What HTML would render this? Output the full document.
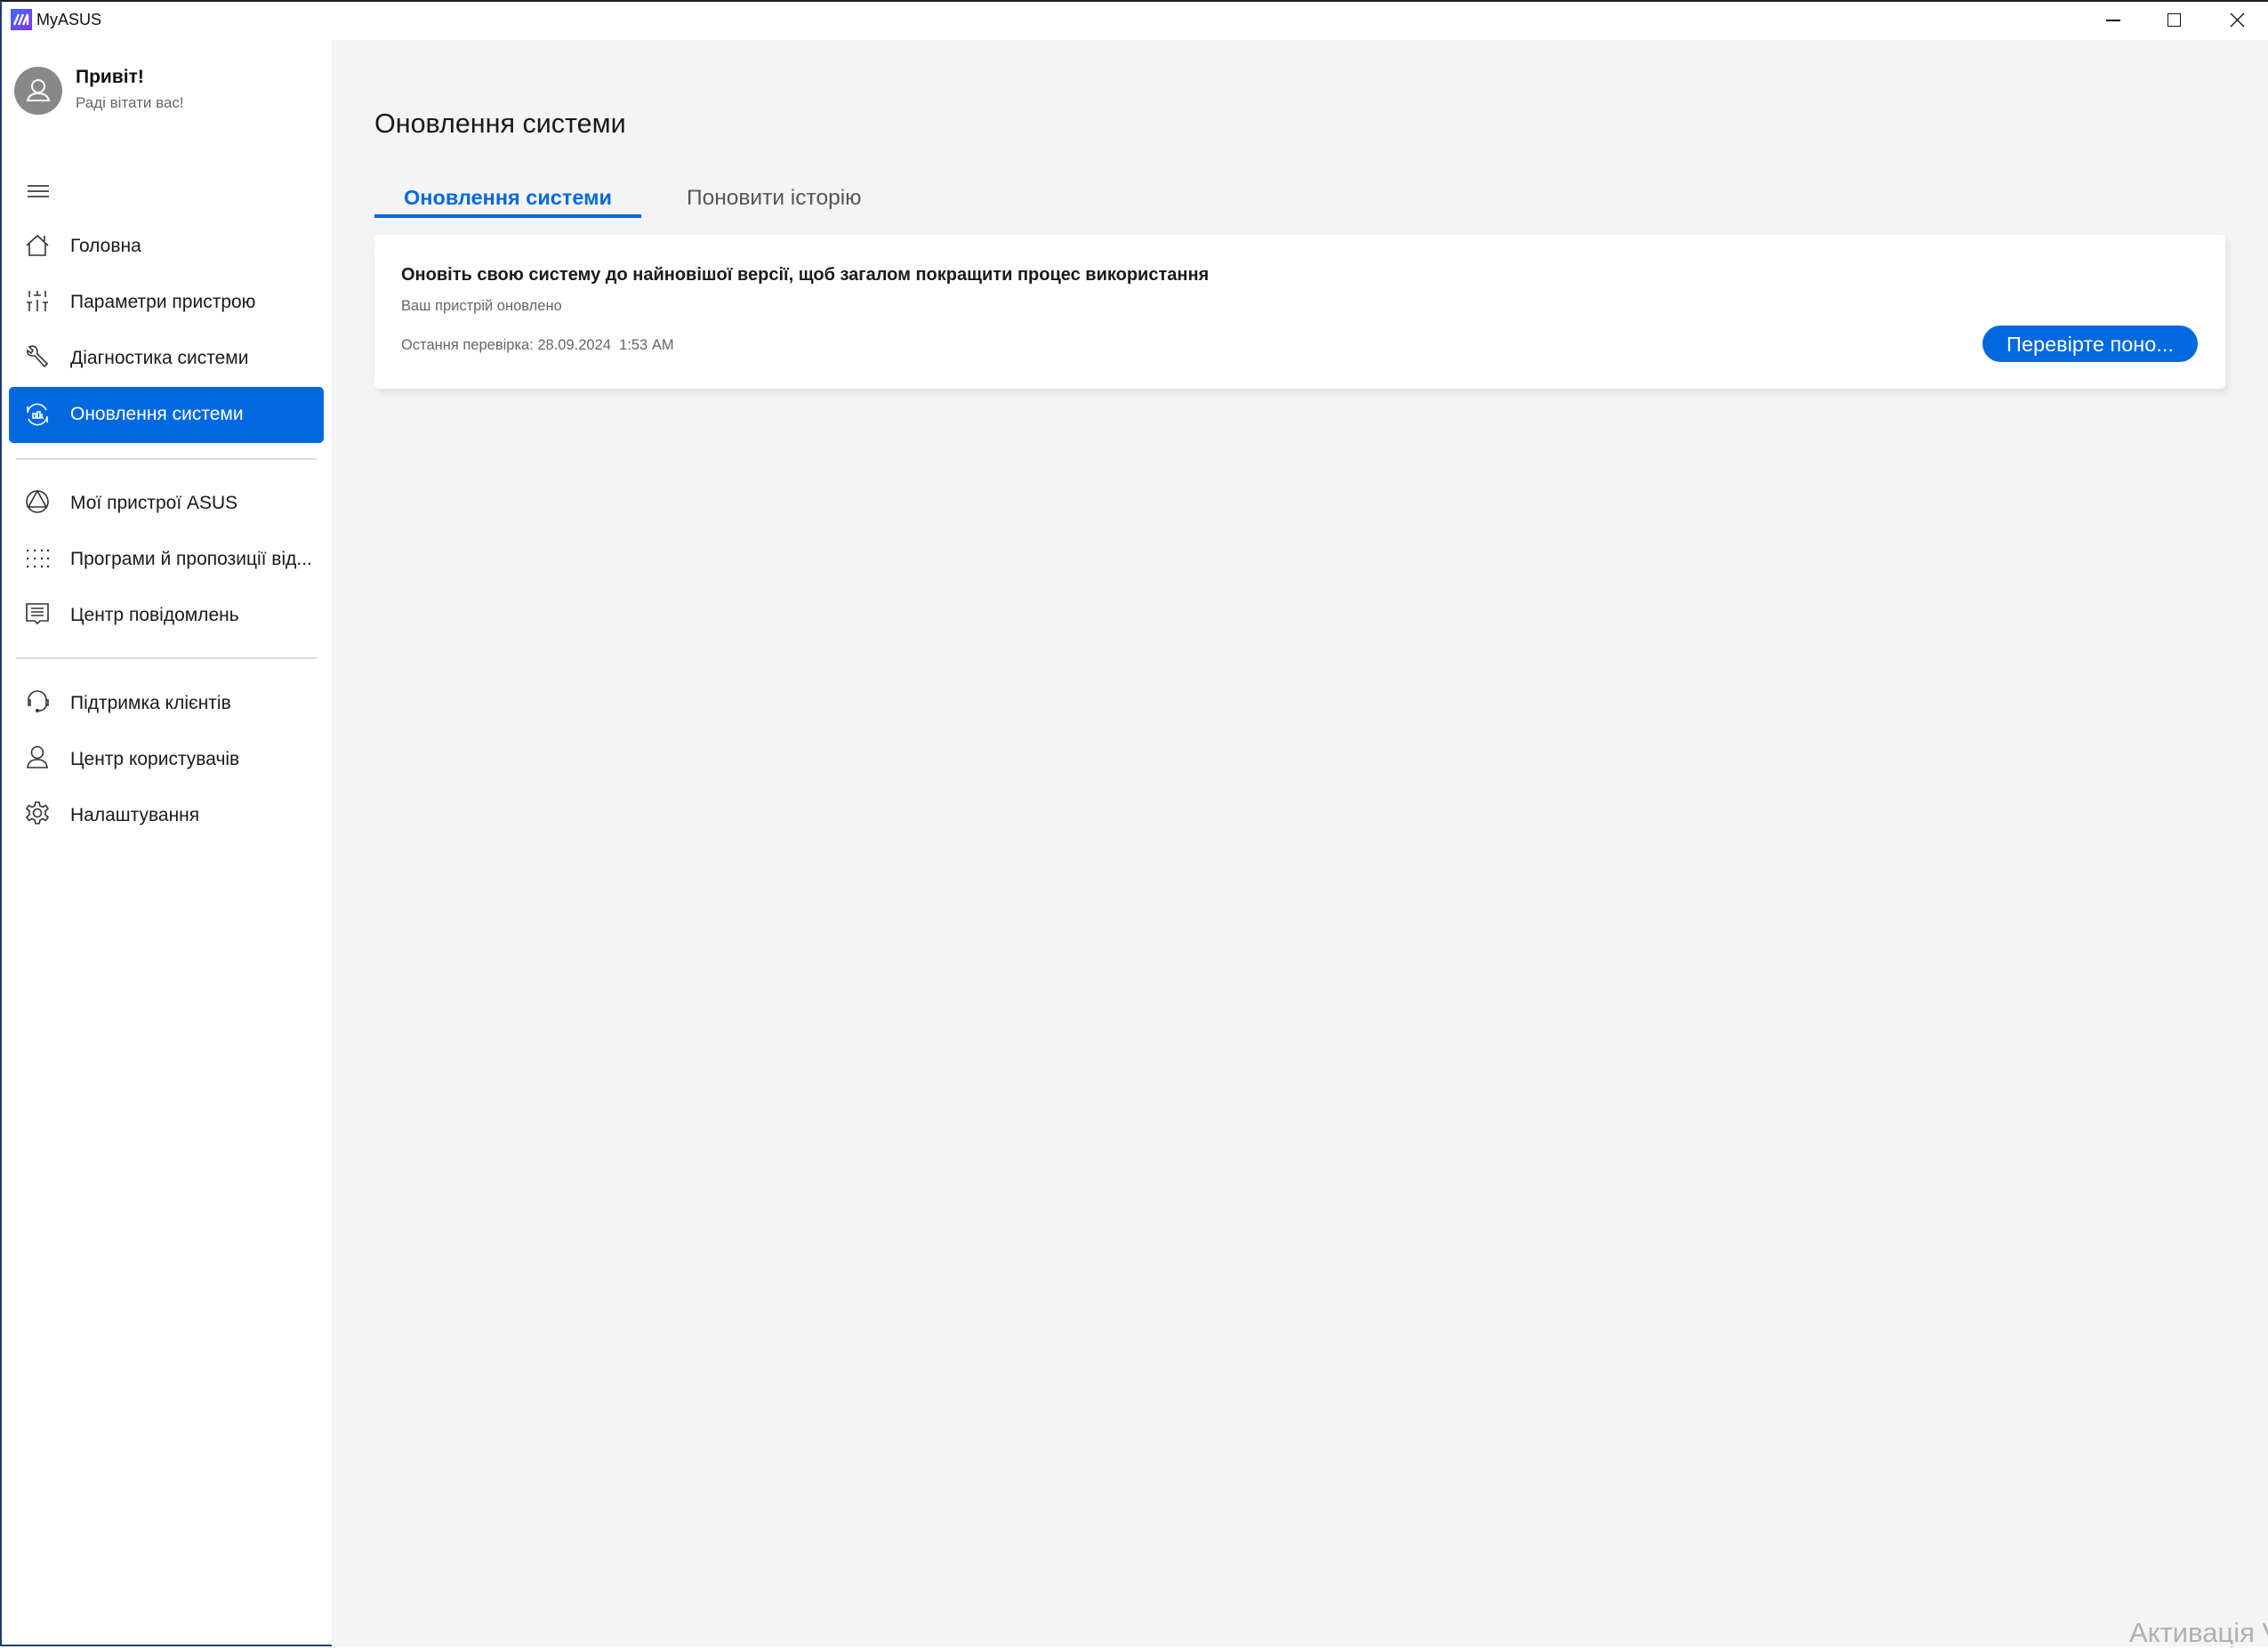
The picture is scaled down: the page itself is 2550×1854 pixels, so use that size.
<!DOCTYPE html>
<html><head><meta charset="utf-8">
<style>
*{margin:0;padding:0;box-sizing:border-box}
html,body{width:2550px;height:1851px;overflow:hidden;background:#fff;font-family:"Liberation Sans","Noto Sans CJK SC",sans-serif;color:#1a1a1a}
.abs{position:absolute}
.win{position:absolute;left:0;top:0;width:2550px;height:1851px;border-top:2px solid #1c1f26;border-left:2px solid #1f3c70;border-bottom:2px solid #1f3c70}
.main{position:absolute;left:373px;top:45px;right:0;bottom:0;background:#f4f4f4}
.nav{position:absolute;left:79px;font-size:21px;color:#1a1a1a;line-height:30px}
.ic{position:absolute;left:28px;width:28px;height:28px}
.ic svg{width:28px;height:28px;fill:none;stroke:#333;stroke-width:1.6}
.hr{position:absolute;left:18px;width:338px;height:2px;background:#d9d9d9}
</style></head><body>
<div class="win"></div>
<svg class="abs" style="left:12px;top:10px" width="24" height="24" viewBox="0 0 24 24"><defs><linearGradient id="g" x1="0" y1="0" x2="1" y2="1"><stop offset="0" stop-color="#3a6cff"/><stop offset="1" stop-color="#8a2cff"/></linearGradient></defs><rect width="24" height="24" fill="url(#g)"/><path d="M4 18 L9 6 M9 18 L14 6 M14 18 L19 6 L19 18" stroke="#fff" stroke-width="2.4" fill="none"/></svg>
<div class="abs" style="left:41px;top:12px;font-size:18px;color:#111">MyASUS</div>
<div class="abs" style="left:2368px;top:22px;width:16px;height:1.5px;background:#111"></div>
<div class="abs" style="left:2437px;top:15px;width:15px;height:15px;border:1.5px solid #111"></div>
<svg class="abs" style="left:2507px;top:14px" width="17" height="17" viewBox="0 0 17 17"><path d="M1 1L16 16M16 1L1 16" stroke="#111" stroke-width="1.3"/></svg>

<div class="main"></div>

<div class="abs" style="left:16px;top:75px;width:54px;height:54px;border-radius:50%;background:#888"></div>
<svg class="abs" style="left:16px;top:75px" width="54" height="54" viewBox="0 0 54 54" fill="none" stroke="#fff" stroke-width="2"><circle cx="27" cy="22" r="7"/><path d="M15 38 Q17 30 27 30 Q37 30 39 38 Z"/></svg>
<div class="abs" style="left:85px;top:75px;font-size:21px;font-weight:bold;color:#111">Привіт!</div>
<div class="abs" style="left:85px;top:106px;font-size:17px;color:#666">Раді вітати вас!</div>

<div class="abs" style="left:31px;top:208px;width:24px;height:1.5px;background:#555"></div>
<div class="abs" style="left:31px;top:214px;width:24px;height:1.5px;background:#555"></div>
<div class="abs" style="left:31px;top:220px;width:24px;height:1.5px;background:#555"></div>

<div class="ic" style="top:262px"><svg viewBox="0 0 28 28"><path d="M2 14 L14 3 L26 14 M5 11 V25 H23 V11 M22 9 V3"/></svg></div>
<div class="nav" style="top:262px">Головна</div>

<div class="ic" style="top:324px"><svg viewBox="0 0 28 28"><path d="M5 3V10 M14 3V8 M23 3V10 M10 8H18 M5 16V26 M2 16H8 M14 13V26 M23 16V26 M20 16H26"/></svg></div>
<div class="nav" style="top:325px">Параметри пристрою</div>

<div class="ic" style="top:387px"><svg viewBox="0 0 28 28"><path d="M5 3 L9 7 L7 10 L3 7 Q2 12 8 13 L11 13 L22 25 L25 22 L14 11 L14 8 Q13 2 8 2 Z"/></svg></div>
<div class="nav" style="top:388px">Діагностика системи</div>

<div class="abs" style="left:10px;top:435px;width:354px;height:63px;background:#0069e0;border-radius:5px"></div>
<div class="ic" style="top:452px"><svg viewBox="0 0 28 28" style="stroke:#fff"><path d="M3 12 A11 11 0 0 1 24 9 M25 16 A11 11 0 0 1 4 19 M3 5V12 M25 23V16 M9 13V18H12V13Z M14 11V18H17V11Z M19 13V18H21"/></svg></div>
<div class="nav" style="top:451px;color:#fff">Оновлення системи</div>

<div class="hr" style="top:515px"></div>

<div class="ic" style="top:550px"><svg viewBox="0 0 28 28"><circle cx="14" cy="14" r="12"/><path d="M14 2 L24 20 L4 20 Z"/></svg></div>
<div class="nav" style="top:551px">Мої пристрої ASUS</div>

<div class="ic" style="top:614px"><svg viewBox="0 0 28 28" style="stroke:#333;stroke-width:2.4;stroke-linecap:round"><path d="M3 4h.1M11 4h.1M19 4h.1M26 4h.1M3 13h.1M11 13h.1M19 13h.1M26 13h.1M3 22h.1M11 22h.1M19 22h.1M26 22h.1" transform="translate(0,1)"/></svg></div>
<div class="nav" style="top:614px">Програми й пропозиції від...</div>

<div class="ic" style="top:676px"><svg viewBox="0 0 28 28"><path d="M2 3H26V22H17L14 25L11 22H2Z M7 8H21 M7 12H21 M7 16H21"/></svg></div>
<div class="nav" style="top:677px">Центр повідомлень</div>

<div class="hr" style="top:739px"></div>

<div class="ic" style="top:775px"><svg viewBox="0 0 28 28"><path d="M4 16 V12 A10 10 0 0 1 24 12 V18 A8 8 0 0 1 15 24 M4 12H6V18H4Z M24 12H26V18H24Z"/><circle cx="14" cy="24" r="1.2" fill="#333"/></svg></div>
<div class="nav" style="top:776px">Підтримка клієнтів</div>

<div class="ic" style="top:837px"><svg viewBox="0 0 28 28"><circle cx="14" cy="9" r="6.5"/><path d="M3 26 Q4 17 14 17 Q24 17 25 26 Z"/></svg></div>
<div class="nav" style="top:839px">Центр користувачів</div>

<div class="ic" style="top:900px"><svg viewBox="0 0 28 28"><circle cx="14" cy="14" r="4.5"/><path d="M12 2H16L17 6L20 7.5L23.5 5.5L26 9L23 12V16L26 19L23.5 22.5L20 20.5L17 22L16 26H12L11 22L8 20.5L4.5 22.5L2 19L5 16V12L2 9L4.5 5.5L8 7.5L11 6Z"/></svg></div>
<div class="nav" style="top:902px">Налаштування</div>

<div class="abs" style="left:421px;top:122px;font-size:30.5px;color:#1a1a1a">Оновлення системи</div>
<div class="abs" style="left:454px;top:209px;font-size:23.5px;font-weight:bold;color:#0069e0">Оновлення системи</div>
<div class="abs" style="left:421px;top:241px;width:300px;height:4px;background:#0069e0"></div>
<div class="abs" style="left:772px;top:209px;font-size:24.5px;color:#555">Поновити історію</div>

<div class="abs" style="left:421px;top:264px;width:2081px;height:173px;background:#fff;border-radius:5px;box-shadow:3px 5px 8px rgba(0,0,0,0.08)"></div>
<div class="abs" style="left:451px;top:298px;font-size:20px;font-weight:bold;color:#1a1a1a">Оновіть свою систему до найновішої версії, щоб загалом покращити процес використання</div>
<div class="abs" style="left:451px;top:335px;font-size:16.5px;color:#666">Ваш пристрій оновлено</div>
<div class="abs" style="left:451px;top:379px;font-size:16.5px;color:#666">Остання перевірка: 28.09.2024&nbsp; 1:53 AM</div>
<div class="abs" style="left:2229px;top:366px;width:242px;height:41px;border-radius:21px;background:#0069e0;color:#fff;font-size:23.5px;line-height:43px;text-align:center;white-space:nowrap">Перевірте поно...</div>

<div class="abs" style="left:2394px;top:1818px;font-size:31px;color:#b0b0b0;white-space:nowrap">Активація V</div>
<div class="abs" style="left:373px;bottom:0;width:2177px;height:2px;background:#f4f4f4"></div>
</body></html>
